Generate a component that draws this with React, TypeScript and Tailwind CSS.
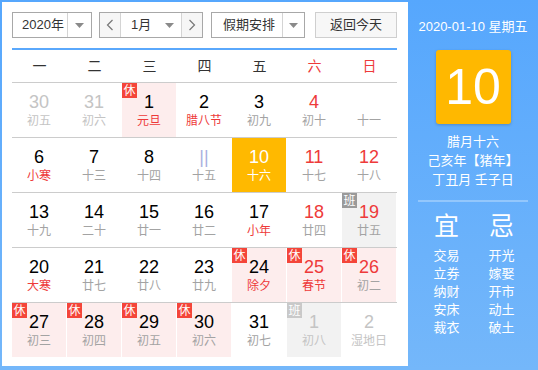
import React from 'react';

type Day = {
  num: string;
  lunar: string;
  numColor?: string;
  lunarColor?: string;
  bg?: string;
  badge?: 'rest' | 'work' | 'workLight';
  today?: boolean;
};

const RED = 'text-[#ee3a3a]';
const GRAY = 'text-[#a3a3a3]';
const FADED = 'text-[#c4c4c4]';
const PINK = 'bg-[#fdeded]';
const GREY_BG = 'bg-[#f2f2f2]';

const weeks: Day[][] = [
  [
    { num: '30', lunar: '初五', numColor: FADED, lunarColor: FADED },
    { num: '31', lunar: '初六', numColor: FADED, lunarColor: FADED },
    { num: '1', lunar: '元旦', lunarColor: RED, bg: PINK, badge: 'rest' },
    { num: '2', lunar: '腊八节', lunarColor: RED },
    { num: '3', lunar: '初九' },
    { num: '4', lunar: '初十', numColor: RED },
    { num: '', lunar: '十一' },
  ],
  [
    { num: '6', lunar: '小寒', lunarColor: RED },
    { num: '7', lunar: '十三' },
    { num: '8', lunar: '十四' },
    { num: '||', lunar: '十五', numColor: 'text-[#aab0e0]' },
    { num: '10', lunar: '十六', today: true },
    { num: '11', lunar: '十七', numColor: RED },
    { num: '12', lunar: '十八', numColor: RED },
  ],
  [
    { num: '13', lunar: '十九' },
    { num: '14', lunar: '二十' },
    { num: '15', lunar: '廿一' },
    { num: '16', lunar: '廿二' },
    { num: '17', lunar: '小年', lunarColor: RED },
    { num: '18', lunar: '廿四', numColor: RED },
    { num: '19', lunar: '廿五', numColor: RED, bg: GREY_BG, badge: 'work' },
  ],
  [
    { num: '20', lunar: '大寒', lunarColor: RED },
    { num: '21', lunar: '廿七' },
    { num: '22', lunar: '廿八' },
    { num: '23', lunar: '廿九' },
    { num: '24', lunar: '除夕', lunarColor: RED, bg: PINK, badge: 'rest' },
    { num: '25', lunar: '春节', numColor: RED, lunarColor: RED, bg: PINK, badge: 'rest' },
    { num: '26', lunar: '初二', numColor: RED, bg: PINK, badge: 'rest' },
  ],
  [
    { num: '27', lunar: '初三', bg: PINK, badge: 'rest' },
    { num: '28', lunar: '初四', bg: PINK, badge: 'rest' },
    { num: '29', lunar: '初五', bg: PINK, badge: 'rest' },
    { num: '30', lunar: '初六', bg: PINK, badge: 'rest' },
    { num: '31', lunar: '初七' },
    { num: '1', lunar: '初八', numColor: FADED, lunarColor: FADED, bg: GREY_BG, badge: 'workLight' },
    { num: '2', lunar: '湿地日', numColor: FADED, lunarColor: FADED },
  ],
];

const weekdays = ['一', '二', '三', '四', '五', '六', '日'];

const good = ['交易', '立券', '纳财', '安床', '裁衣'];
const bad = ['开光', '嫁娶', '开市', '动土', '破土'];

function Caret() {
  return (
    <svg width="9" height="5" viewBox="0 0 9 5" className="block">
      <path d="M0 0h9L4.5 5z" fill="#8a8a8a" />
    </svg>
  );
}

function Chevron({ dir }: { dir: 'left' | 'right' }) {
  return (
    <svg width="8" height="12" viewBox="0 0 8 12" className="block">
      <path
        d={dir === 'left' ? 'M6.5 1L1.5 6l5 5' : 'M1.5 1l5 5-5 5'}
        fill="none"
        stroke="#777"
        strokeWidth="1.2"
      />
    </svg>
  );
}

function DayCell({ day }: { day: Day }) {
  const badgeClass =
    day.badge === 'rest'
      ? 'bg-[#f4453a]'
      : day.badge === 'work'
        ? 'bg-[#9a9a9a]'
        : 'bg-[#c9c9c9]';

  return (
    <div className="pr-px h-[54px]">
      <div
        className={`relative h-full flex flex-col items-center justify-center ${
          day.today ? 'bg-[#ffb900]' : day.bg ?? ''
        }`}
      >
        {day.badge && (
          <span
            className={`absolute left-0 top-0 w-[15px] h-[15px] flex items-center justify-center text-[12px] leading-none text-white ${badgeClass}`}
          >
            {day.badge === 'rest' ? '休' : '班'}
          </span>
        )}
        <span
          className={`h-[20px] text-[18px] leading-[20px] ${
            day.today ? 'text-white' : day.numColor ?? 'text-black'
          }`}
        >
          {day.num}
        </span>
        <span
          className={`mt-[1px] text-[12px] leading-[16px] ${
            day.today ? 'text-white' : day.lunarColor ?? GRAY
          }`}
        >
          {day.lunar}
        </span>
      </div>
    </div>
  );
}

export default function App() {
  return (
    <div
      className="w-[538px] h-[370px] flex pl-[2px] pt-[2px] pb-[4px] bg-gradient-to-b from-[#56a7fd] to-[#74b7fa] text-[13px]"
      style={{ fontFamily: '"Liberation Sans", "Noto Sans CJK SC", sans-serif' }}
    >
      <div className="w-[406px] h-full bg-white pl-[10px] pt-[10px]">
        {/* controls */}
        <div className="flex h-[26px] text-[#333]">
          <div className="w-[80px] flex border border-[#a8a8a8]">
            <div className="w-[54px] pl-[9px] flex items-center">2020年</div>
            <div className="flex-1 border-l border-[#d4d4d4] flex items-center justify-center">
              <Caret />
            </div>
          </div>
          <div className="ml-[7px] w-[104px] flex border border-[#a8a8a8]">
            <div className="w-[21px] bg-[#f6f6f6] flex items-center justify-center border-r border-[#d4d4d4]">
              <Chevron dir="left" />
            </div>
            <div className="flex-1 flex items-center pl-[10px]">
              <span>1月</span>
              <span className="ml-[14px]">
                <Caret />
              </span>
            </div>
            <div className="w-[21px] bg-[#f6f6f6] flex items-center justify-center border-l border-[#d4d4d4]">
              <Chevron dir="right" />
            </div>
          </div>
          <div className="ml-[8px] w-[94px] flex border border-[#a8a8a8]">
            <div className="w-[70px] pl-[11px] flex items-center">假期安排</div>
            <div className="flex-1 border-l border-[#d4d4d4] flex items-center justify-center">
              <Caret />
            </div>
          </div>
          <button className="ml-[10px] w-[82px] border border-[#cfcfcf] bg-[#f7f7f7] text-[#333] flex items-center justify-center">
            返回今天
          </button>
        </div>

        <div className="mt-[10px] w-[385px] h-[2px] bg-[#5aa8fc]" />

        {/* weekday header */}
        <div className="w-[385px] grid grid-cols-7 h-[32px] items-center text-[14px] text-[#333]">
          {weekdays.map((w, i) => (
            <div key={w} className={`text-center ${i >= 5 ? 'text-[#ee3a3a]' : ''}`}>
              {w}
            </div>
          ))}
        </div>

        {/* days */}
        <div className="w-[385px]">
          {weeks.map((week, i) => (
            <div key={i} className="grid grid-cols-7 border-t border-[#cccccc]">
              {week.map((day, j) => (
                <DayCell key={j} day={day} />
              ))}
            </div>
          ))}
        </div>
      </div>

      {/* side panel */}
      <div className="flex-1 flex flex-col items-center text-white">
        <div className="mt-[16px] leading-[18px]">2020-01-10 星期五</div>
        <div className="mt-[14px] w-[75px] h-[74px] rounded-[3px] bg-[#ffb800] shadow-[0_1px_3px_rgba(0,0,0,0.2)] flex items-center justify-center text-[50px] leading-none">
          10
        </div>
        <div className="mt-[8px] flex flex-col items-center leading-[19px]">
          <div>腊月十六</div>
          <div>己亥年【猪年】</div>
          <div>丁丑月 壬子日</div>
        </div>
        <div className="mt-[11px] w-[110px] h-[2px] bg-[#93c7fc]" />
        <div className="w-full flex pl-[11px] mt-[9px]">
          <div className="w-[55px] flex flex-col items-center">
            <div className="text-[25px] leading-[30px]">宜</div>
            <div className="mt-[6px] flex flex-col items-center leading-[18px]">
              {good.map(g => (
                <div key={g}>{g}</div>
              ))}
            </div>
          </div>
          <div className="w-[55px] flex flex-col items-center">
            <div className="text-[25px] leading-[30px]">忌</div>
            <div className="mt-[6px] flex flex-col items-center leading-[18px]">
              {bad.map(b => (
                <div key={b}>{b}</div>
              ))}
            </div>
          </div>
        </div>
      </div>
    </div>
  );
}
